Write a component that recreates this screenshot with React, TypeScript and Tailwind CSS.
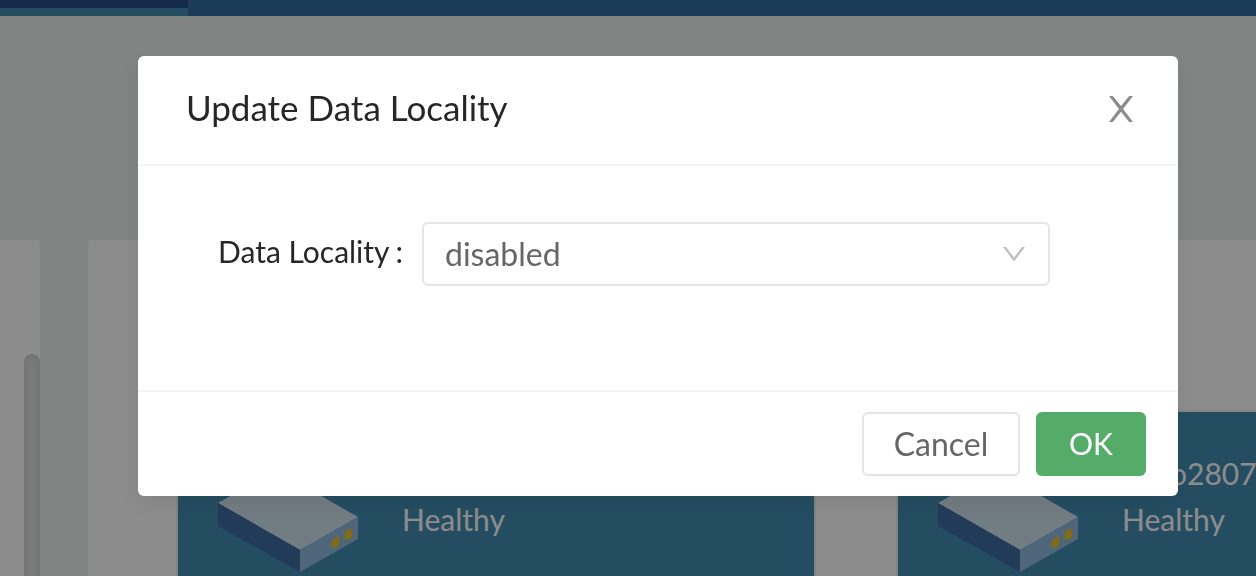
import React, { useState } from "react";

function ServerIcon() {
  return (
    <svg className="h-[102px] w-[140px] shrink-0" viewBox="0 0 140 102" aria-hidden="true">
      <polygon points="0,33 58,0 140,47 82,80" fill="#d0e3ee" />
      <polygon points="0,33 82,80 82,102 0,56" fill="#3f6ca1" />
      <polygon points="82,80 140,47 140,69 82,102" fill="#90b8dc" />
      <ellipse cx="117.5" cy="72.5" rx="4" ry="6" transform="rotate(24 117.5 72.5)" fill="#e6c534" />
      <ellipse cx="130.5" cy="64.5" rx="4" ry="6" transform="rotate(24 130.5 64.5)" fill="#e6c534" />
    </svg>
  );
}

function NodeCard({ name }: { name?: string }) {
  return (
    <article className="flex h-60 w-[640px] shrink-0 gap-11 border-2 border-[#f0f0f0] bg-[#438cb2] px-10 pt-[38px] text-[30px] leading-[46px] text-white">
      <div className="pt-5">
        <ServerIcon />
      </div>
      <div>
        <p className="h-[46px] pl-12">{name}</p>
        <p>Healthy</p>
      </div>
    </article>
  );
}

function Page() {
  return (
    <div className="flex h-screen flex-col overflow-hidden bg-[#edf0ee]">
      <header className="flex h-4 shrink-0 bg-[#316da2]">
        <div className="w-[188px] border-b-8 border-[#438cb2] bg-[#234e83]" />
      </header>
      <main className="flex flex-1 gap-12 pt-56">
        <aside className="flex w-10 shrink-0 justify-end rounded-tr bg-white pt-[114px]">
          <div className="w-4 rounded-t-full bg-[#e2e2e2] shadow-[inset_0_0_10px_rgba(0,0,0,0.12)]" />
        </aside>
        <section className="flex min-w-0 flex-1 gap-20 overflow-hidden rounded-tl bg-white pt-[170px] pl-22">
          <NodeCard />
          <NodeCard name="o2807" />
        </section>
      </main>
    </div>
  );
}

export default function App() {
  const [locality, setLocality] = useState("disabled");

  return (
    <div className="font-[Lato,sans-serif]">
      <Page />
      <div className="fixed inset-0 bg-black/45 pt-14 pr-[78px] pl-[138px]">
        <div
          role="dialog"
          aria-modal="true"
          aria-labelledby="dialog-title"
          className="rounded-md bg-white shadow-[0_8px_24px_rgba(0,0,0,0.08)]"
        >
          <header className="flex items-start justify-between border-b-2 border-[#f3f3f3] pt-[30px] pr-11 pb-[34px] pl-12">
            <h2 id="dialog-title" className="text-[35px] leading-[42px] text-[#262626]">
              Update Data Locality
            </h2>
            <button type="button" aria-label="Close" className="h-11 pt-[2px] text-[#8c8c8c]">
              <svg className="h-[26px] w-[26px]" viewBox="0 0 26 26" fill="currentColor" aria-hidden="true">
                <path d="M1 0H4.8L13 10L21.2 0H25L15.1 12.9L25 26H21.2L13 15.8L4.8 26H1L10.9 12.9Z" />
              </svg>
            </button>
          </header>

          <form className="flex items-start gap-4 pt-14 pr-32 pb-26 pl-20">
            <label htmlFor="locality" className="w-[188px] whitespace-nowrap text-[30px] leading-[58px] text-[#262626]">
              Data Locality<span className="pl-[6px]">:</span>
            </label>
            <div className="relative flex-1">
              <select
                id="locality"
                value={locality}
                onChange={(e) => setLocality(e.target.value)}
                className="block h-16 w-full appearance-none rounded-md border-2 border-[#e4e4e4] bg-white px-[21px] text-[32px] text-[#666666]"
              >
                <option value="disabled">disabled</option>
                <option value="best-effort">best-effort</option>
              </select>
              <svg
                className="pointer-events-none absolute top-[25px] right-[25px] h-[14px] w-[22px] text-[#bfbfbf]"
                viewBox="0 0 22 14"
                fill="currentColor"
                aria-hidden="true"
              >
                <path d="M0 0H3L11 10.6L19 0H22L11.6 13.7Q11 14.3 10.4 13.7Z" />
              </svg>
            </div>
          </form>

          <footer className="flex justify-end gap-4 border-t-2 border-[#f3f3f3] px-8 py-5">
            <button
              type="button"
              className="h-16 w-[158px] rounded-md border-2 border-[#e4e4e4] bg-white text-[32px] text-[#666666] shadow-[0_4px_0_rgba(0,0,0,0.015)]"
            >
              Cancel
            </button>
            <button
              type="button"
              className="h-16 w-[110px] rounded-md bg-[#55ac68] pb-[2px] text-[30px] text-white shadow-[0_4px_0_rgba(0,0,0,0.015)]"
            >
              OK
            </button>
          </footer>
        </div>
      </div>
    </div>
  );
}
